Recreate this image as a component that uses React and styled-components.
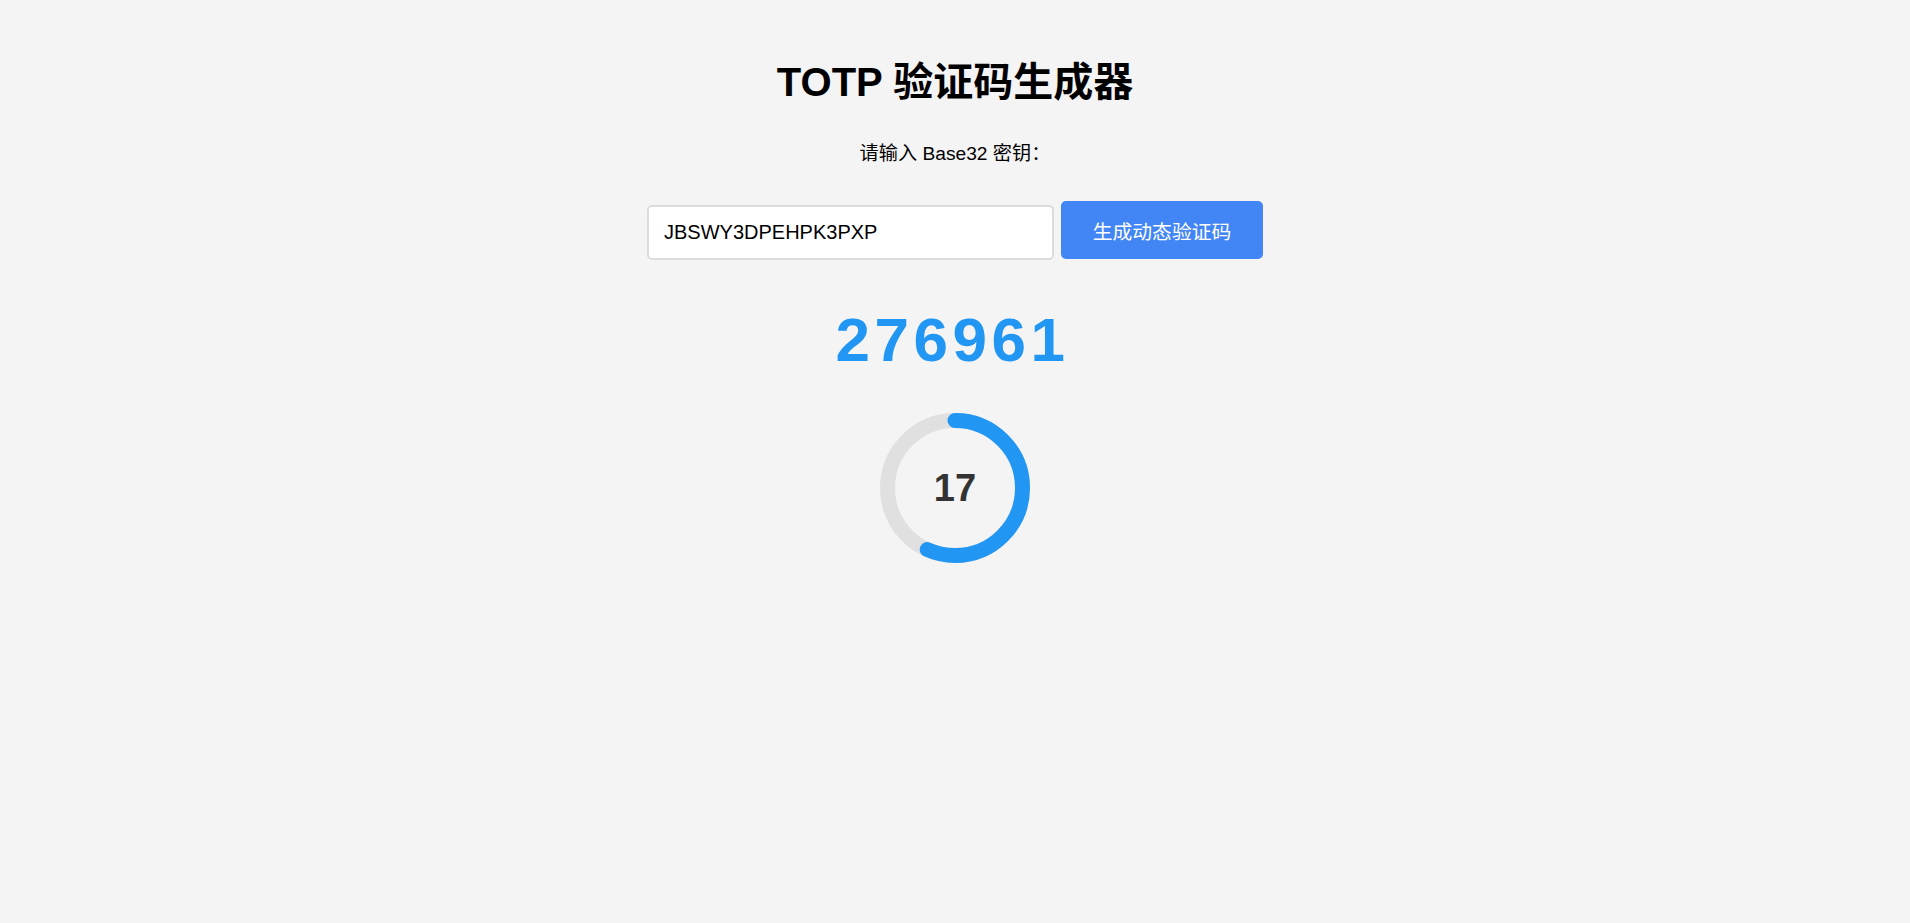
import React from 'react';
import styled, { createGlobalStyle } from 'styled-components';

const GlobalStyle = createGlobalStyle`
  html, body {
    margin: 0;
    padding: 0;
    background: #f4f4f4;
  }
  body {
    font-family: 'Liberation Sans', Arial, 'Noto Sans CJK SC', sans-serif;
    color: #000;
  }
`;

const Page = styled.div`
  min-height: 923px;
  display: flex;
  flex-direction: column;
  align-items: center;
  padding-top: 59px;
  box-sizing: border-box;
`;

const Title = styled.h1`
  margin: 0;
  font-size: 40px;
  line-height: 46px;
  font-weight: bold;
`;

const Label = styled.p`
  margin: 37px 0 0;
  font-size: 19.2px;
  line-height: 24px;
`;

const InputRow = styled.div`
  margin-top: 35px;
  display: flex;
  align-items: flex-start;
  gap: 7px;
`;

const SecretInput = styled.input`
  box-sizing: border-box;
  margin-top: 4px;
  width: 407px;
  height: 55px;
  padding: 0 15px;
  border: 2px solid #dcdcdc;
  border-radius: 5px;
  background: #fff;
  font-family: inherit;
  font-size: 20px;
  color: #000;
  outline: none;
`;

const GenerateButton = styled.button`
  width: 202px;
  height: 58px;
  border: none;
  border-radius: 5px;
  background: #4285f4;
  color: #fff;
  font-family: inherit;
  font-size: 19.8px;
  cursor: pointer;
`;

const Code = styled.div`
  margin-top: 44px;
  margin-right: 5px;
  font-size: 62px;
  line-height: 72px;
  font-weight: bold;
  letter-spacing: 4.5px;
  color: #2196f3;
`;

const Timer = styled.div`
  position: relative;
  margin-top: 37px;
  width: 150px;
  height: 150px;
`;

const TimerNumber = styled.span`
  position: absolute;
  inset: 0;
  display: flex;
  align-items: center;
  justify-content: center;
  font-size: 38px;
  font-weight: bold;
  color: #333;
`;

const PERIOD = 30;
const RADIUS = 67.5;
const CIRC = 2 * Math.PI * RADIUS;

function CountdownRing({ seconds }) {
  const progress = seconds / PERIOD;
  return (
    <Timer>
      <svg width="150" height="150" viewBox="0 0 150 150">
        <circle cx="75" cy="75" r={RADIUS} fill="none" stroke="#e0e0e0" strokeWidth="15" />
        <circle
          cx="75"
          cy="75"
          r={RADIUS}
          fill="none"
          stroke="#2196f3"
          strokeWidth="15"
          strokeLinecap="round"
          strokeDasharray={CIRC}
          strokeDashoffset={CIRC * (1 - progress)}
          transform="rotate(-90 75 75)"
        />
      </svg>
      <TimerNumber>{seconds}</TimerNumber>
    </Timer>
  );
}

export default function App() {
  return (
    <>
      <GlobalStyle />
      <Page>
        <Title>TOTP 验证码生成器</Title>
        <Label>请输入 Base32 密钥：</Label>
        <InputRow>
          <SecretInput defaultValue="JBSWY3DPEHPK3PXP" />
          <GenerateButton>生成动态验证码</GenerateButton>
        </InputRow>
        <Code>276961</Code>
        <CountdownRing seconds={17} />
      </Page>
    </>
  );
}
